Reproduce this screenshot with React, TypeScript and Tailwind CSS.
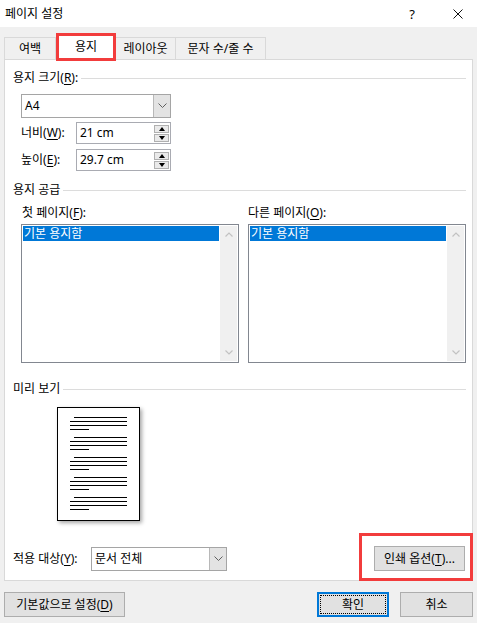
import React from "react";

const U = ({ c }: { c: string }) => (
  <span className="underline underline-offset-[2px] decoration-[1px]">{c}</span>
);

const Chevron = () => (
  <svg width="9" height="6" viewBox="0 0 9 6">
    <polyline points="0.5,0.5 4.5,4.5 8.5,0.5" fill="none" stroke="#606060" strokeWidth="1" />
  </svg>
);

const SectionHeader = ({ children }: { children: React.ReactNode }) => (
  <div className="flex items-center h-[16px] pl-[8px] pr-[6px]">
    <span className="whitespace-nowrap">{children}</span>
    <div className="flex-1 h-px bg-[#dcdcdc] ml-[3px]" />
  </div>
);

const Combo = ({ text, w }: { text: string; w: string }) => (
  <div className={`${w} h-[24px] border border-[#a5a5a5] bg-white flex items-stretch`}>
    <div className="flex-1 flex items-center pl-[3px]">{text}</div>
    <div className="w-[17px] bg-[#e3e3e3] border-l border-[#b8b8b8] flex items-center justify-center">
      <Chevron />
    </div>
  </div>
);

const Spin = () => (
  <div className="flex flex-col gap-[1px] mr-[1px]">
    <div className="w-[15px] h-[8px] bg-[#eaeaea] border border-[#b0b0b0] flex items-center justify-center">
      <svg width="6" height="4" viewBox="0 0 6 4">
        <polygon points="3,0 6,4 0,4" fill="#000" />
      </svg>
    </div>
    <div className="w-[15px] h-[8px] bg-[#eaeaea] border border-[#b0b0b0] flex items-center justify-center">
      <svg width="6" height="4" viewBox="0 0 6 4">
        <polygon points="0,0 6,0 3,4" fill="#000" />
      </svg>
    </div>
  </div>
);

const SpinInput = ({ value }: { value: string }) => (
  <div className="w-[95px] h-[22px] border border-[#a9abb2] bg-white flex items-center">
    <div className="flex-1 pl-[3px]">{value}</div>
    <Spin />
  </div>
);

const ListBox = () => (
  <div className="w-[218px] h-[139px] border border-[#828790] bg-white p-[1px] flex">
    <div className="flex-1">
      <div className="h-[15px] bg-[#0078d7] text-white flex items-center pl-[1px] mr-[1px]">기본 용지함</div>
    </div>
    <div className="w-[17px] bg-[#f0f0f0] flex flex-col items-center justify-between py-[6px]">
      <svg width="8" height="5" viewBox="0 0 8 5">
        <polyline points="0.5,4.5 4,1 7.5,4.5" fill="none" stroke="#c2c2c2" strokeWidth="1.2" />
      </svg>
      <svg width="8" height="5" viewBox="0 0 8 5">
        <polyline points="0.5,0.5 4,4 7.5,0.5" fill="none" stroke="#c2c2c2" strokeWidth="1.2" />
      </svg>
    </div>
  </div>
);

const LineGroup = () => (
  <div className="flex flex-col gap-[3px]">
    <div className="h-px bg-black ml-[4px]" />
    <div className="h-px bg-black" />
    <div className="h-px bg-black" />
    <div className="h-px bg-black w-[19px]" />
  </div>
);

export default function App() {
  return (
    <div className="w-[477px] h-[623px] bg-[#f0f0f0] flex flex-col text-[12px] leading-[16px] text-black overflow-hidden font-['Noto_Sans','Noto_Sans_CJK_KR',sans-serif]">
      {/* Title bar */}
      <div className="h-[27px] bg-white flex items-center pl-[5px] shrink-0">
        <span>페이지 설정</span>
        <span className="ml-auto w-[12px] text-center text-[13px]">?</span>
        <svg className="ml-[35px] mr-[14px]" width="10" height="10" viewBox="0 0 10 10">
          <line x1="0.5" y1="0.5" x2="9.5" y2="9.5" stroke="#111" strokeWidth="1" />
          <line x1="9.5" y1="0.5" x2="0.5" y2="9.5" stroke="#111" strokeWidth="1" />
        </svg>
      </div>

      {/* Tabs */}
      <div className="flex items-end pl-[4px] h-[32px] shrink-0">
        <div className="w-[52px] h-[22px] border-t border-l border-r border-[#d9d9d9] flex items-center justify-center">
          여백
        </div>
        <div className="relative z-10 w-[60px] h-[28px] -mb-[2px] bg-white border-[3px] border-[#f23c3c] flex items-center justify-center">
          용지
        </div>
        <div className="w-[60px] h-[22px] border-t border-r border-[#d9d9d9] flex items-center justify-center">
          레이아웃
        </div>
        <div className="w-[90px] h-[22px] border-t border-r border-[#d9d9d9] flex items-center justify-center">
          문자 수/줄 수
        </div>
      </div>

      {/* Panel */}
      <div className="mx-[4px] h-[522px] bg-white border border-[#d9d9d9] flex flex-col pt-[10px] shrink-0">
        <SectionHeader>
          용지 크기(<U c="R" />):
        </SectionHeader>
        <div className="pl-[16px] mt-[8px]">
          <Combo text="A4" w="w-[150px]" />
        </div>
        <div className="pl-[16px] mt-[4px] flex items-center">
          <span className="w-[55px]">
            너비(<U c="W" />):
          </span>
          <SpinInput value="21 cm" />
        </div>
        <div className="pl-[16px] mt-[5px] flex items-center">
          <span className="w-[55px]">
            높이(<U c="E" />):
          </span>
          <SpinInput value="29.7 cm" />
        </div>

        <div className="mt-[11px]">
          <SectionHeader>용지 공급</SectionHeader>
        </div>
        <div className="pl-[16px] mt-[7px] flex gap-[9px]">
          <div className="flex flex-col gap-[3px]">
            <span className="pl-[1px]">
              첫 페이지(<U c="F" />):
            </span>
            <ListBox />
          </div>
          <div className="flex flex-col gap-[3px]">
            <span>
              다른 페이지(<U c="O" />):
            </span>
            <ListBox />
          </div>
        </div>

        <div className="mt-[18px]">
          <SectionHeader>미리 보기</SectionHeader>
        </div>
        <div className="mt-[10px] ml-[52px] w-[83px] h-[114px] border border-black bg-white shadow-[2px_2px_4px_rgba(0,0,0,0.35)] pt-[9px] px-[12px] flex flex-col gap-[7px]">
          <LineGroup />
          <LineGroup />
          <LineGroup />
          <LineGroup />
          <LineGroup />
        </div>

        <div className="mt-[25px] pl-[8px] pr-[7px] flex items-center">
          <span className="w-[78px]">
            적용 대상(<U c="Y" />):
          </span>
          <Combo text="문서 전체" w="w-[136px]" />
          <div className="relative ml-auto">
            <div className="w-[91px] h-[25px] bg-[#e1e1e1] border border-[#adadad] flex items-center justify-center">
              <span>
                인쇄 옵션(<U c="T" />)...
              </span>
            </div>
            <div className="absolute -left-[15px] -right-[8px] -top-[13px] -bottom-[10px] border-[3px] border-[#f23c3c] pointer-events-none" />
          </div>
        </div>
      </div>

      {/* Bottom buttons */}
      <div className="mt-[11px] flex items-center pl-[4px] pr-[4px]">
        <div className="w-[121px] h-[25px] bg-[#e1e1e1] border border-[#adadad] flex items-center justify-center">
          <span>
            기본값으로 설정(<U c="D" />)
          </span>
        </div>
        <div className="ml-auto w-[72px] h-[25px] bg-[#e1e1e1] border-2 border-[#0078d7] p-[1px]">
          <div className="w-full h-full border border-dotted border-black flex items-center justify-center">
            확인
          </div>
        </div>
        <div className="ml-[11px] w-[73px] h-[25px] bg-[#e1e1e1] border border-[#adadad] flex items-center justify-center">
          취소
        </div>
      </div>
    </div>
  );
}
